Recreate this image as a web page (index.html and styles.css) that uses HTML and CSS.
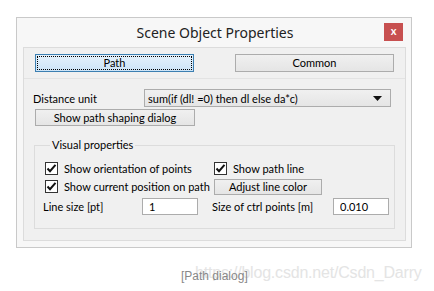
FILE: index.html
```html
<!DOCTYPE html>
<html lang="en">
<head>
    <meta charset="UTF-8">
    <title>Scene Object Properties</title>
    <link rel="stylesheet" href="styles.css">
</head>
<body>
    <div class="window">
        <div class="titlebar">
            <span class="title">Scene Object Properties</span>
            <span class="close">x</span>
        </div>
        <div class="client">
            <div class="tabs">
                <button class="btn tab current-tab"><span class="focus">Path</span></button>
                <button class="btn tab">Common</button>
            </div>
            <div class="separator"></div>
            <div class="row unit-row">
                <span class="label">Distance unit</span>
                <div class="combo">
                    <span>sum(if (dl! =0) then dl else da*c)</span>
                    <svg width="9" height="5" viewBox="0 0 9 5"><path d="M0 0H9L4.5 5Z" fill="#111"/></svg>
                </div>
            </div>
            <button class="btn shaping">Show path shaping dialog</button>
            <fieldset class="group">
                <legend>Visual properties</legend>
                <div class="grow">
                    <label class="check col1"><span class="box"><svg width="11" height="11" viewBox="0 0 11 11"><path d="M1.5 5.5L4 8.2L9.5 1.8" fill="none" stroke="#111" stroke-width="2"/></svg></span>Show orientation of points</label>
                    <label class="check"><span class="box"><svg width="11" height="11" viewBox="0 0 11 11"><path d="M1.5 5.5L4 8.2L9.5 1.8" fill="none" stroke="#111" stroke-width="2"/></svg></span>Show path line</label>
                </div>
                <div class="grow row2">
                    <label class="check col1"><span class="box"><svg width="11" height="11" viewBox="0 0 11 11"><path d="M1.5 5.5L4 8.2L9.5 1.8" fill="none" stroke="#111" stroke-width="2"/></svg></span>Show current position on path</label>
                    <button class="btn adjust">Adjust line color</button>
                </div>
                <div class="grow row3">
                    <span class="label size-label">Line size [pt]</span>
                    <input class="field" value="1">
                    <span class="label ctrl-label">Size of ctrl points [m]</span>
                    <input class="field" value="0.010">
                </div>
            </fieldset>
        </div>
    </div>
    <div class="caption">
        <span class="watermark">https://blog.csdn.net/Csdn_Darry</span>
        <span class="caption-text">[Path dialog]</span>
    </div>
</body>
</html>
```

FILE: styles.css
```css
body {
    margin: 0;
    background: #fff;
    font-family: Lato, "Noto Sans", sans-serif;
    font-size: 11px;
    color: #000;
}
.window {
    margin: 17px 0 0 16px;
    width: 394px;
    height: 229px;
    border: 1px solid #c9c9c9;
    background: #f7f7f7;
    display: flex;
    flex-direction: column;
}
.titlebar {
    position: relative;
    height: 29px;
    display: flex;
    align-items: center;
    justify-content: center;
}
.title {
    font-family: "Noto Sans", sans-serif;
    font-size: 14px;
    color: #222;
    margin-left: 2px;
}
.close {
    position: absolute;
    right: 8px;
    top: 5px;
    width: 19px;
    height: 18px;
    background: #c75050;
    color: #fff;
    font-size: 11px;
    font-weight: bold;
    line-height: 16px;
    text-align: center;
}
.client {
    margin: 0 5px 0 6px;
    height: 192px;
    border: 1px solid #dcdcdc;
    background: #f0f0f0;
}
.btn {
    font: inherit;
    color: #000;
    padding: 0;
    border: 1px solid #acacac;
    background: linear-gradient(#f0f0f0, #e5e5e5);
    cursor: pointer;
}
.tabs {
    display: flex;
    gap: 41px;
    padding: 6px 0 0 11px;
}
.tab {
    width: 159px;
    height: 18px;
    line-height: 14px;
}
.current-tab {
    border-color: #3c7fb1;
    background: linear-gradient(#e5f1fb, #cde4f7);
    padding: 1px;
}
.focus {
    display: block;
    height: 12px;
    line-height: 12px;
    border: 1px dotted #000;
}
.separator {
    margin-top: 6px;
    height: 1px;
    background: #e3e3e3;
}
.row {
    display: flex;
    align-items: center;
}
.unit-row {
    margin: 10px 0 0 9px;
}
.unit-row .label {
    width: 111px;
}
.combo {
    width: 247px;
    height: 18px;
    box-sizing: border-box;
    border: 1px solid #acacac;
    background: linear-gradient(#f0f0f0, #e5e5e5);
    display: flex;
    align-items: center;
    justify-content: space-between;
    padding: 0 8px 0 3px;
}
.shaping {
    display: block;
    margin: 2px 0 0 11px;
    width: 160px;
    height: 17px;
    line-height: 14px;
}
.group {
    margin: 13px 0 0 10px;
    width: 361px;
    height: 90px;
    box-sizing: border-box;
    border: 1px solid #dcdcdc;
    padding: 10px 0 0 10px;
}
.group legend {
    padding: 0 2px;
    margin-left: 5px;
    line-height: 12px;
}
.grow {
    display: flex;
    align-items: center;
    height: 15px;
}
.row2 {
    margin-top: 3px;
}
.row3 {
    margin-top: 4px;
    height: 17px;
}
.check {
    display: flex;
    align-items: center;
    white-space: nowrap;
}
.col1 {
    width: 169px;
}
.box {
    width: 11px;
    height: 11px;
    border: 1px solid #333;
    background: #fff;
    margin-right: 6px;
    display: flex;
}
.adjust {
    width: 108px;
    height: 16px;
    line-height: 13px;
}
.size-label {
    width: 99px;
    margin-left: -2px;
}
.ctrl-label {
    width: 121px;
    margin-left: 14px;
    white-space: nowrap;
}
.field {
    font: inherit;
    width: 56px;
    height: 17px;
    box-sizing: border-box;
    border: 1px solid #acacac;
    background: #fff;
    padding: 0 6px;
}
.caption {
    position: relative;
    height: 44px;
}
.caption-text {
    position: absolute;
    left: 181px;
    top: 21px;
    font-family: "Liberation Sans", Arial, sans-serif;
    font-size: 12px;
    color: #888;
}
.watermark {
    position: absolute;
    left: 195px;
    top: 16px;
    font-family: "Liberation Sans", Arial, sans-serif;
    font-size: 16px;
    color: #e4e4e4;
    letter-spacing: -0.2px;
}
```
